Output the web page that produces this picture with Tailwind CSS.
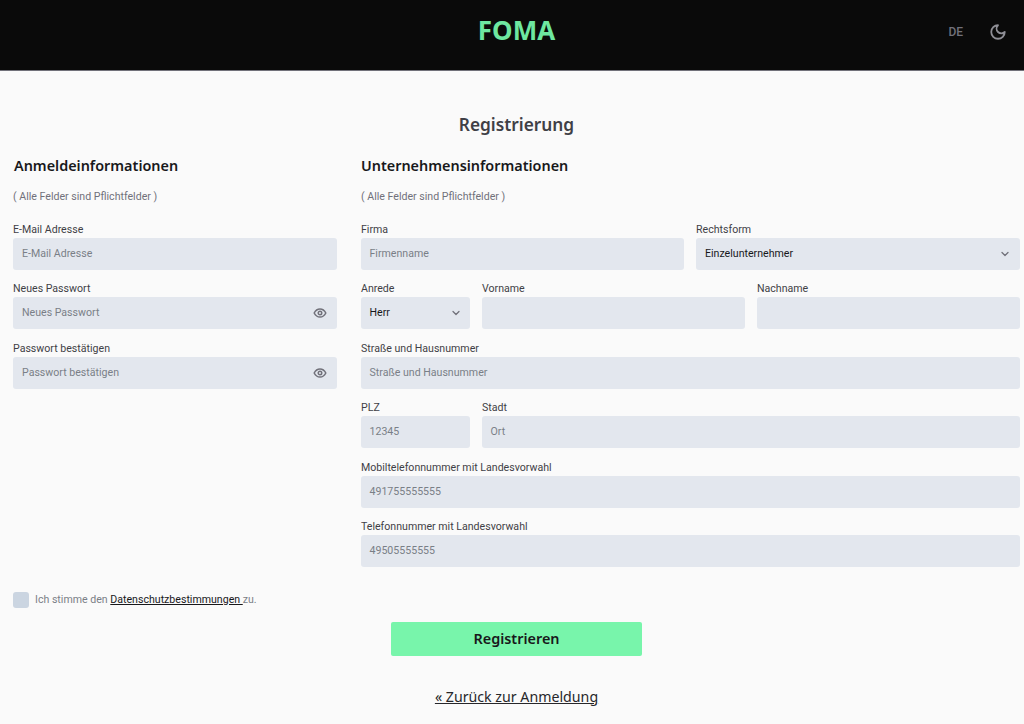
<!DOCTYPE html>
<html lang="de">
<head>
    <meta charset="UTF-8">
    <meta name="viewport" content="width=device-width, initial-scale=1.0">
    <title>FOMA - Registrierung</title>
    <script src="https://cdn.jsdelivr.net/npm/@tailwindcss/browser@4"></script>
</head>
<body class="bg-[#fafafa] font-['Roboto',sans-serif] h-[724px] overflow-hidden">
    <header class="h-[71px] bg-[#0a0a0a] border-b border-[#71717a] relative flex items-center justify-center">
        <span class="text-[#6ee7a0] text-[26px] font-bold font-['Noto_Sans',sans-serif] leading-none ml-[9px] mb-[10px]">FOMA</span>
        <div class="absolute right-[17px] top-[23px] flex items-center gap-[26px]">
            <span class="text-[12px] font-medium text-[#71717a]">DE</span>
            <svg class="w-[18px] h-[18px] text-[#8f8f96]" viewBox="0 0 24 24" fill="none" stroke="currentColor" stroke-width="2.4" stroke-linecap="round" stroke-linejoin="round"><path d="M12 3a6 6 0 0 0 9 9 9 9 0 1 1-9-9Z"/></svg>
        </div>
    </header>

    <main class="pl-[13px] pr-[4px]">
        <h1 class="text-center text-[17.3px] font-semibold font-['Noto_Sans',sans-serif] text-[#3f3f46] leading-6 pt-[42px]">Registrierung</h1>

        <div class="flex gap-[24px] mt-[19px]">
            <section class="w-[324px] shrink-0">
                <h2 class="text-[14.4px] font-semibold font-['Noto_Sans',sans-serif] text-[#18181b] leading-5 pl-px">Anmeldeinformationen</h2>
                <p class="text-[10.6px] text-[#71717a] mt-[13px] leading-4">( Alle Felder sind Pflichtfelder )</p>
                <div class="mt-[16.5px] flex flex-col gap-[11.5px]">
                    <label class="block">
                        <span class="block text-[10.6px] text-[#3f3f46] leading-4">E-Mail Adresse</span>
                        <div class="h-[32px] bg-[#e3e7ee] rounded-[3px] flex items-center px-[9px] text-[10.6px] text-[#7a7f87]">E-Mail Adresse</div>
                    </label>
                    <label class="block">
                        <span class="block text-[10.6px] text-[#3f3f46] leading-4">Neues Passwort</span>
                        <div class="h-[32px] bg-[#e3e7ee] rounded-[3px] flex items-center justify-between pl-[9px] pr-[10px] text-[10.6px] text-[#7a7f87]">
                            Neues Passwort
                            <svg class="w-[14px] h-[14px] text-[#71717a]" viewBox="0 0 24 24" fill="none" stroke="currentColor" stroke-width="2.6" stroke-linecap="round" stroke-linejoin="round"><path d="M2 12s3.6-7 10-7 10 7 10 7-3.6 7-10 7-10-7-10-7Z"/><circle cx="12" cy="12" r="3"/></svg>
                        </div>
                    </label>
                    <label class="block">
                        <span class="block text-[10.6px] text-[#3f3f46] leading-4">Passwort bestätigen</span>
                        <div class="h-[32px] bg-[#e3e7ee] rounded-[3px] flex items-center justify-between pl-[9px] pr-[10px] text-[10.6px] text-[#7a7f87]">
                            Passwort bestätigen
                            <svg class="w-[14px] h-[14px] text-[#71717a]" viewBox="0 0 24 24" fill="none" stroke="currentColor" stroke-width="2.6" stroke-linecap="round" stroke-linejoin="round"><path d="M2 12s3.6-7 10-7 10 7 10 7-3.6 7-10 7-10-7-10-7Z"/><circle cx="12" cy="12" r="3"/></svg>
                        </div>
                    </label>
                </div>
            </section>

            <section class="w-[659px] shrink-0">
                <h2 class="text-[14.4px] font-semibold font-['Noto_Sans',sans-serif] text-[#18181b] leading-5">Unternehmensinformationen</h2>
                <p class="text-[10.6px] text-[#71717a] mt-[13px] leading-4">( Alle Felder sind Pflichtfelder )</p>
                <div class="mt-[16.5px] flex flex-col gap-[11.5px]">
                    <div class="flex gap-[12px]">
                        <label class="block w-[323px] shrink-0">
                            <span class="block text-[10.6px] text-[#3f3f46] leading-4">Firma</span>
                            <div class="h-[32px] bg-[#e3e7ee] rounded-[3px] flex items-center px-[8.5px] text-[10.6px] text-[#7a7f87]">Firmenname</div>
                        </label>
                        <label class="block flex-1">
                            <span class="block text-[10.6px] text-[#3f3f46] leading-4">Rechtsform</span>
                            <div class="h-[32px] bg-[#e3e7ee] rounded-[3px] flex items-center justify-between px-[9px] text-[10.6px] text-[#18181b]">
                                Einzelunternehmer
                                <svg class="w-[12px] h-[12px] text-[#71717a]" viewBox="0 0 24 24" fill="none" stroke="currentColor" stroke-width="2.5" stroke-linecap="round" stroke-linejoin="round"><path d="m6 9 6 6 6-6"/></svg>
                            </div>
                        </label>
                    </div>
                    <div class="flex gap-[12px]">
                        <label class="block w-[109px] shrink-0">
                            <span class="block text-[10.6px] text-[#3f3f46] leading-4">Anrede</span>
                            <div class="h-[32px] bg-[#e3e7ee] rounded-[3px] flex items-center justify-between px-[8.5px] text-[10.6px] text-[#18181b]">
                                Herr
                                <svg class="w-[12px] h-[12px] text-[#71717a]" viewBox="0 0 24 24" fill="none" stroke="currentColor" stroke-width="2.5" stroke-linecap="round" stroke-linejoin="round"><path d="m6 9 6 6 6-6"/></svg>
                            </div>
                        </label>
                        <label class="block flex-1">
                            <span class="block text-[10.6px] text-[#3f3f46] leading-4">Vorname</span>
                            <div class="h-[32px] bg-[#e3e7ee] rounded-[3px]"></div>
                        </label>
                        <label class="block flex-1">
                            <span class="block text-[10.6px] text-[#3f3f46] leading-4">Nachname</span>
                            <div class="h-[32px] bg-[#e3e7ee] rounded-[3px]"></div>
                        </label>
                    </div>
                    <label class="block">
                        <span class="block text-[10.6px] text-[#3f3f46] leading-4">Straße und Hausnummer</span>
                        <div class="h-[32px] bg-[#e3e7ee] rounded-[3px] flex items-center px-[8.5px] text-[10.6px] text-[#7a7f87]">Straße und Hausnummer</div>
                    </label>
                    <div class="flex gap-[12px]">
                        <label class="block w-[109px] shrink-0">
                            <span class="block text-[10.6px] text-[#3f3f46] leading-4">PLZ</span>
                            <div class="h-[32px] bg-[#e3e7ee] rounded-[3px] flex items-center px-[8.5px] text-[10.6px] text-[#7a7f87]">12345</div>
                        </label>
                        <label class="block flex-1">
                            <span class="block text-[10.6px] text-[#3f3f46] leading-4">Stadt</span>
                            <div class="h-[32px] bg-[#e3e7ee] rounded-[3px] flex items-center px-[8.5px] text-[10.6px] text-[#7a7f87]">Ort</div>
                        </label>
                    </div>
                    <label class="block">
                        <span class="block text-[10.6px] text-[#3f3f46] leading-4">Mobiltelefonnummer mit Landesvorwahl</span>
                        <div class="h-[32px] bg-[#e3e7ee] rounded-[3px] flex items-center px-[8.5px] text-[10.6px] text-[#7a7f87]">491755555555</div>
                    </label>
                    <label class="block">
                        <span class="block text-[10.6px] text-[#3f3f46] leading-4">Telefonnummer mit Landesvorwahl</span>
                        <div class="h-[32px] bg-[#e3e7ee] rounded-[3px] flex items-center px-[8.5px] text-[10.6px] text-[#7a7f87]">49505555555</div>
                    </label>
                </div>
            </section>
        </div>

        <div class="flex items-center gap-[6px] mt-[24.5px]">
            <span class="w-[16px] h-[16px] bg-[#cbd5e1] rounded-[3px]"></span>
            <p class="text-[10.6px] text-[#7a7f87]">Ich stimme den <a href="#" class="text-[#18181b] underline">Datenschutzbestimmungen </a> zu.</p>
        </div>

        <div class="flex flex-col items-center">
            <button class="mt-[14px] w-[251px] h-[34px] bg-[#78f5ab] rounded-[2px] text-[14.4px] font-semibold font-['Noto_Sans',sans-serif] text-[#18181b]">Registrieren</button>
            <a href="#" class="mt-[30px] text-[14.2px] text-[#27272a] underline font-['Noto_Sans',sans-serif]">« Zurück zur Anmeldung</a>
        </div>
    </main>
</body>
</html>
